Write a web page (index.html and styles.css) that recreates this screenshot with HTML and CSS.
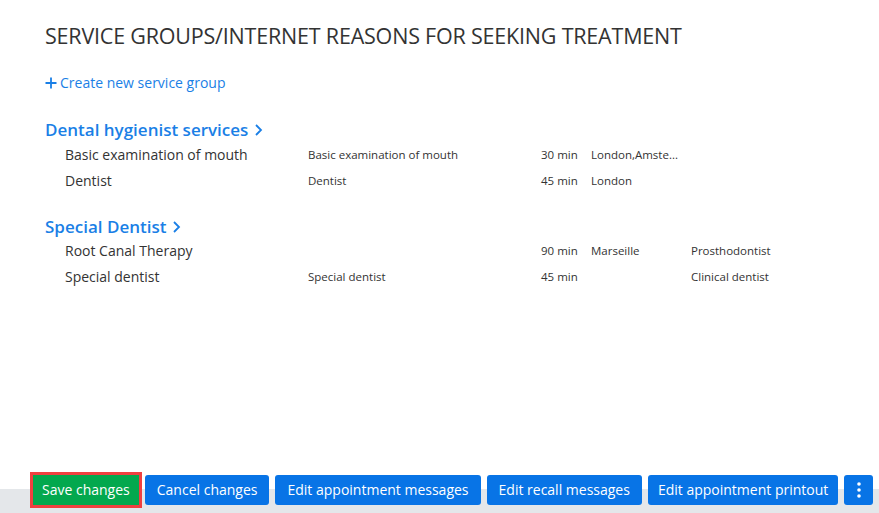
FILE: index.html
```html
<!DOCTYPE html>
<html>
<head>
<meta charset="utf-8">
<link rel="stylesheet" href="styles.css">
</head>
<body>
<div class="page">
  <main class="content">
    <h1 class="title">SERVICE GROUPS/INTERNET REASONS FOR SEEKING TREATMENT</h1>
    <a class="create" href="#"><svg class="plus" width="12" height="12" viewBox="0 0 12 12"><path d="M6 0.5V11.5M0.5 6H11.5" stroke="#1a7fe6" stroke-width="1.8"/></svg><span>Create new service group</span></a>

    <section class="group">
      <h2 class="group-title">Dental hygienist services <svg class="chev" width="9" height="14" viewBox="0 0 9 14"><path d="M2 2l5 5-5 5" fill="none" stroke="#1a7fe6" stroke-width="1.8"/></svg></h2>
      <div class="row"><span class="c-name">Basic examination of mouth</span><span class="c-desc">Basic examination of mouth</span><span class="c-dur">30 min</span><span class="c-loc">London,Amste...</span><span class="c-spec"></span></div>
      <div class="row"><span class="c-name">Dentist</span><span class="c-desc">Dentist</span><span class="c-dur">45 min</span><span class="c-loc">London</span><span class="c-spec"></span></div>
    </section>

    <section class="group">
      <h2 class="group-title">Special Dentist <svg class="chev" width="9" height="14" viewBox="0 0 9 14"><path d="M2 2l5 5-5 5" fill="none" stroke="#1a7fe6" stroke-width="1.8"/></svg></h2>
      <div class="row"><span class="c-name">Root Canal Therapy</span><span class="c-desc"></span><span class="c-dur">90 min</span><span class="c-loc">Marseille</span><span class="c-spec">Prosthodontist</span></div>
      <div class="row"><span class="c-name">Special dentist</span><span class="c-desc">Special dentist</span><span class="c-dur">45 min</span><span class="c-loc"></span><span class="c-spec">Clinical dentist</span></div>
    </section>
  </main>

  <footer class="footer">
    <span class="highlight"><button class="btn btn-green">Save changes</button></span>
    <button class="btn">Cancel changes</button>
    <button class="btn">Edit appointment messages</button>
    <button class="btn">Edit recall messages</button>
    <button class="btn btn-narrow">Edit appointment printout</button>
    <button class="btn btn-more"><svg width="4" height="18" viewBox="0 0 4 18"><circle cx="2" cy="3" r="1.8" fill="#fff"/><circle cx="2" cy="9" r="1.8" fill="#fff"/><circle cx="2" cy="15" r="1.8" fill="#fff"/></svg></button>
  </footer>
</div>
</body>
</html>
```

FILE: styles.css
```css
* { box-sizing: border-box; }
html, body { margin: 0; padding: 0; background: #fff; }
body {
  font-family: "Open Sans", "Noto Sans", sans-serif;
  color: #333;
  width: 879px;
  height: 513px;
  overflow: hidden;
}
.page {
  display: flex;
  flex-direction: column;
  height: 513px;
}
.content {
  flex: 1;
  padding: 22px 0 0 45px;
}
.title {
  margin: 0;
  font-weight: 400;
  font-size: 21.5px;
  line-height: 28px;
  color: #333;
  letter-spacing: -0.2px;
}
.create {
  display: inline-flex;
  align-items: center;
  gap: 3px;
  margin-top: 22px;
  color: #1a7fe6;
  text-decoration: none;
  font-size: 14px;
  line-height: 22px;
}
.group { margin-top: 24px; }
.group + .group { margin-top: 22px; }
.group + .group .group-title { margin-bottom: -2px; }
.group-title {
  margin: 0 0 -1px 0;
  font-size: 17px;
  font-weight: 600;
  color: #1a7fe6;
  line-height: 24px;
  display: flex;
  align-items: center;
  gap: 6px;
}
.row {
  display: grid;
  grid-template-columns: 243px 233px 50px 100px 120px;
  align-items: center;
  height: 26px;
  padding-left: 20px;
}
.c-name { font-size: 14px; }
.c-desc, .c-dur, .c-loc, .c-spec { font-size: 11.5px; }
.footer {
  height: 41px;
  flex-shrink: 0;
  display: flex;
  align-items: flex-start;
  gap: 6px;
  padding-left: 30px;
  background: linear-gradient(to bottom, #fff 0, #fff 17px, #e4e7ea 17px);
}
.highlight {
  border: 3px solid #f04040;
  display: inline-flex;
  margin-right: -3px;
  flex-shrink: 0;
}
.btn {
  font-family: "Open Sans", "Noto Sans", sans-serif;
  font-size: 14px;
  height: 30px;
  margin-top: 3px;
  padding: 0 12px;
  border: none;
  border-radius: 3px;
  background: #0874e6;
  color: #fff;
  line-height: 30px;
  white-space: nowrap;
  flex-shrink: 0;
}
.btn-narrow { padding: 0 10px; }
.highlight .btn { margin-top: 0; }
.btn-green {
  background: #03a84e;
  border-radius: 0;
  padding: 0 9px;
}
.btn-more {
  width: 29px;
  padding: 0;
  display: flex;
  align-items: center;
  justify-content: center;
}
```
